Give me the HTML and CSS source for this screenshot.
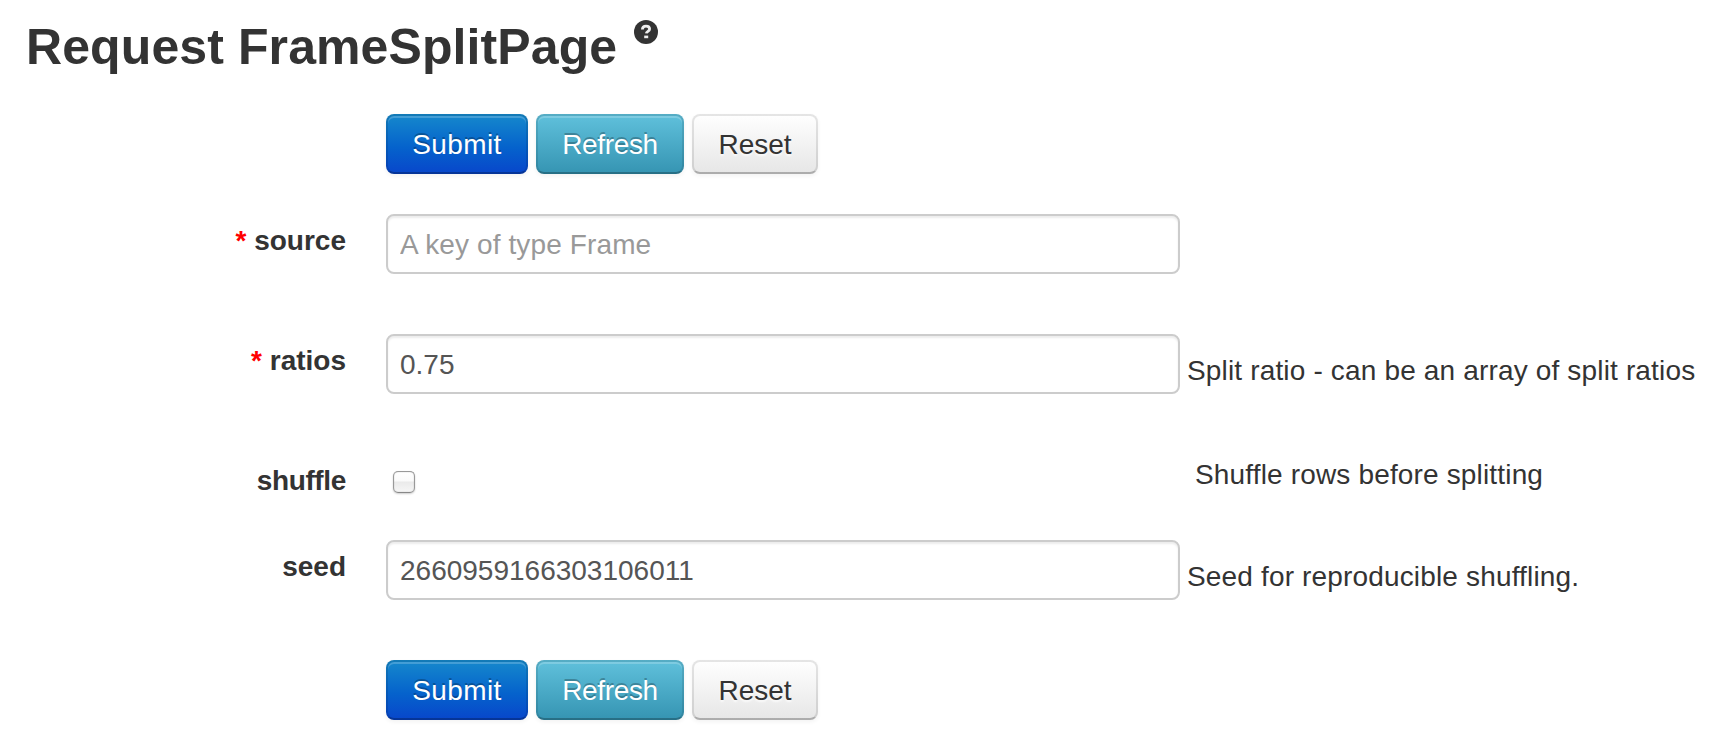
FILE: index.html
```html
<!DOCTYPE html>
<html lang="en"><head><meta charset="utf-8"><title>Request FrameSplitPage</title><link rel="stylesheet" href="styles.css"></head>
<body>
<h2 class="title"><span class="title-text">Request FrameSplitPage</span><svg class="help-icon" viewBox="0 0 24 24"><circle cx="12" cy="12" r="12" fill="#333"/><path d="M8.4 9.4c0-2.2 1.5-3.3 3.6-3.3s3.6 1.1 3.6 2.9c0 2.4-3 2.2-3.3 4.4" fill="none" stroke="#eee" stroke-width="2.8"/><path d="M10.2 15.6h4v2.6h-4z" fill="#eee"/></svg></h2>
<form class="form">
<div class="actions"><button type="button" class="btn submit">Submit</button><button type="button" class="btn refresh">Refresh</button><button type="button" class="btn reset">Reset</button></div>
<div class="row"><label class="label" for="source"><span class="star">*</span> source</label><input class="field source" id="source" placeholder="A key of type Frame"></div>
<div class="row"><label class="label" for="ratios"><span class="star">*</span> ratios</label><input class="field" id="ratios" value="0.75"><span class="help">Split ratio - can be an array of split ratios</span></div>
<div class="row row-check"><label class="label label-tight" for="shuffle">shuffle</label><div class="check-cell"><input type="checkbox" class="check" id="shuffle"></div><span class="help help-top">Shuffle rows before splitting</span></div>
<div class="row"><label class="label" for="seed">seed</label><input class="field" id="seed" value="2660959166303106011"><span class="help">Seed for reproducible shuffling.</span></div>
<div class="actions"><button type="button" class="btn submit">Submit</button><button type="button" class="btn refresh">Refresh</button><button type="button" class="btn reset">Reset</button></div>
</form>
</body></html>
```
FILE: styles.css
```css
* { box-sizing: border-box; }
body { margin: 0; background: #fff; color: #333; font: 28px/40px "Liberation Sans", Arial, sans-serif; }
.title { display: flex; height: 114px; margin: 0; padding: 7px 0 0 26px; font-size: 50px; line-height: 80px; letter-spacing: .1px; }
.help-icon { width: 24px; height: 24px; margin: 13px 0 0 17px; }
.actions { display: flex; gap: 8px; height: 60px; padding-left: 386px; margin-bottom: 40px; }
.row { display: flex; align-items: flex-start; height: 60px; margin-bottom: 60px; }
.row-check { height: 46px; margin-bottom: 40px; }
.label { width: 346px; margin-right: 40px; padding-top: 7px; text-align: right; font-weight: bold; white-space: nowrap; }
.label-tight { letter-spacing: -.35px; }
.star { color: #f00; }
.field { width: 794px; height: 60px; margin: 0; padding: 9px 12px 7px; border: 2px solid #ccc; border-radius: 8px; background: #fff; color: #555; font: inherit; box-shadow: inset 0 2px 2px rgba(0,0,0,.075); outline: 0; }
.source { letter-spacing: .12px; }
.field::placeholder { color: #999; opacity: 1; }
.check-cell { width: 794px; padding: 17px 0 0 7px; line-height: 0; }
.check { appearance: none; display: block; width: 22px; height: 22px; margin: 0; border: 1px solid #999; border-bottom-color: #888; border-radius: 5px; background: linear-gradient(#fff 0, #fafafa 45%, #eaeaea 50%, #f6f6f6); box-shadow: 0 1px 2px rgba(0,0,0,.2), inset 0 0 1px rgba(0,0,0,.4); }
.help { padding: 17px 0 0 7px; letter-spacing: .16px; white-space: nowrap; }
.help-top { padding: 1px 0 0 15px; }
.btn { height: 60px; margin: 0; padding: 1px 0 0; border: 2px solid; border-radius: 8px; color: #fff; font: inherit; text-shadow: 0 -2px 0 rgba(0,0,0,.25); box-shadow: inset 0 2px 0 rgba(255,255,255,.2), 0 2px 4px rgba(0,0,0,.05); background-origin: border-box; border-color: rgba(0,0,0,.1) rgba(0,0,0,.1) rgba(0,0,0,.25); }
.submit { width: 142px; letter-spacing: .4px; background-image: linear-gradient(#1689cc, #0563cc 55%, #0846cb); }
.refresh { width: 148px; letter-spacing: -.35px; background-image: linear-gradient(#60c1dc, #3594b2); }
.reset { width: 126px; color: #333; text-shadow: 0 2px 2px rgba(255,255,255,.75); background-image: linear-gradient(#fff, #e6e6e6); }
```
